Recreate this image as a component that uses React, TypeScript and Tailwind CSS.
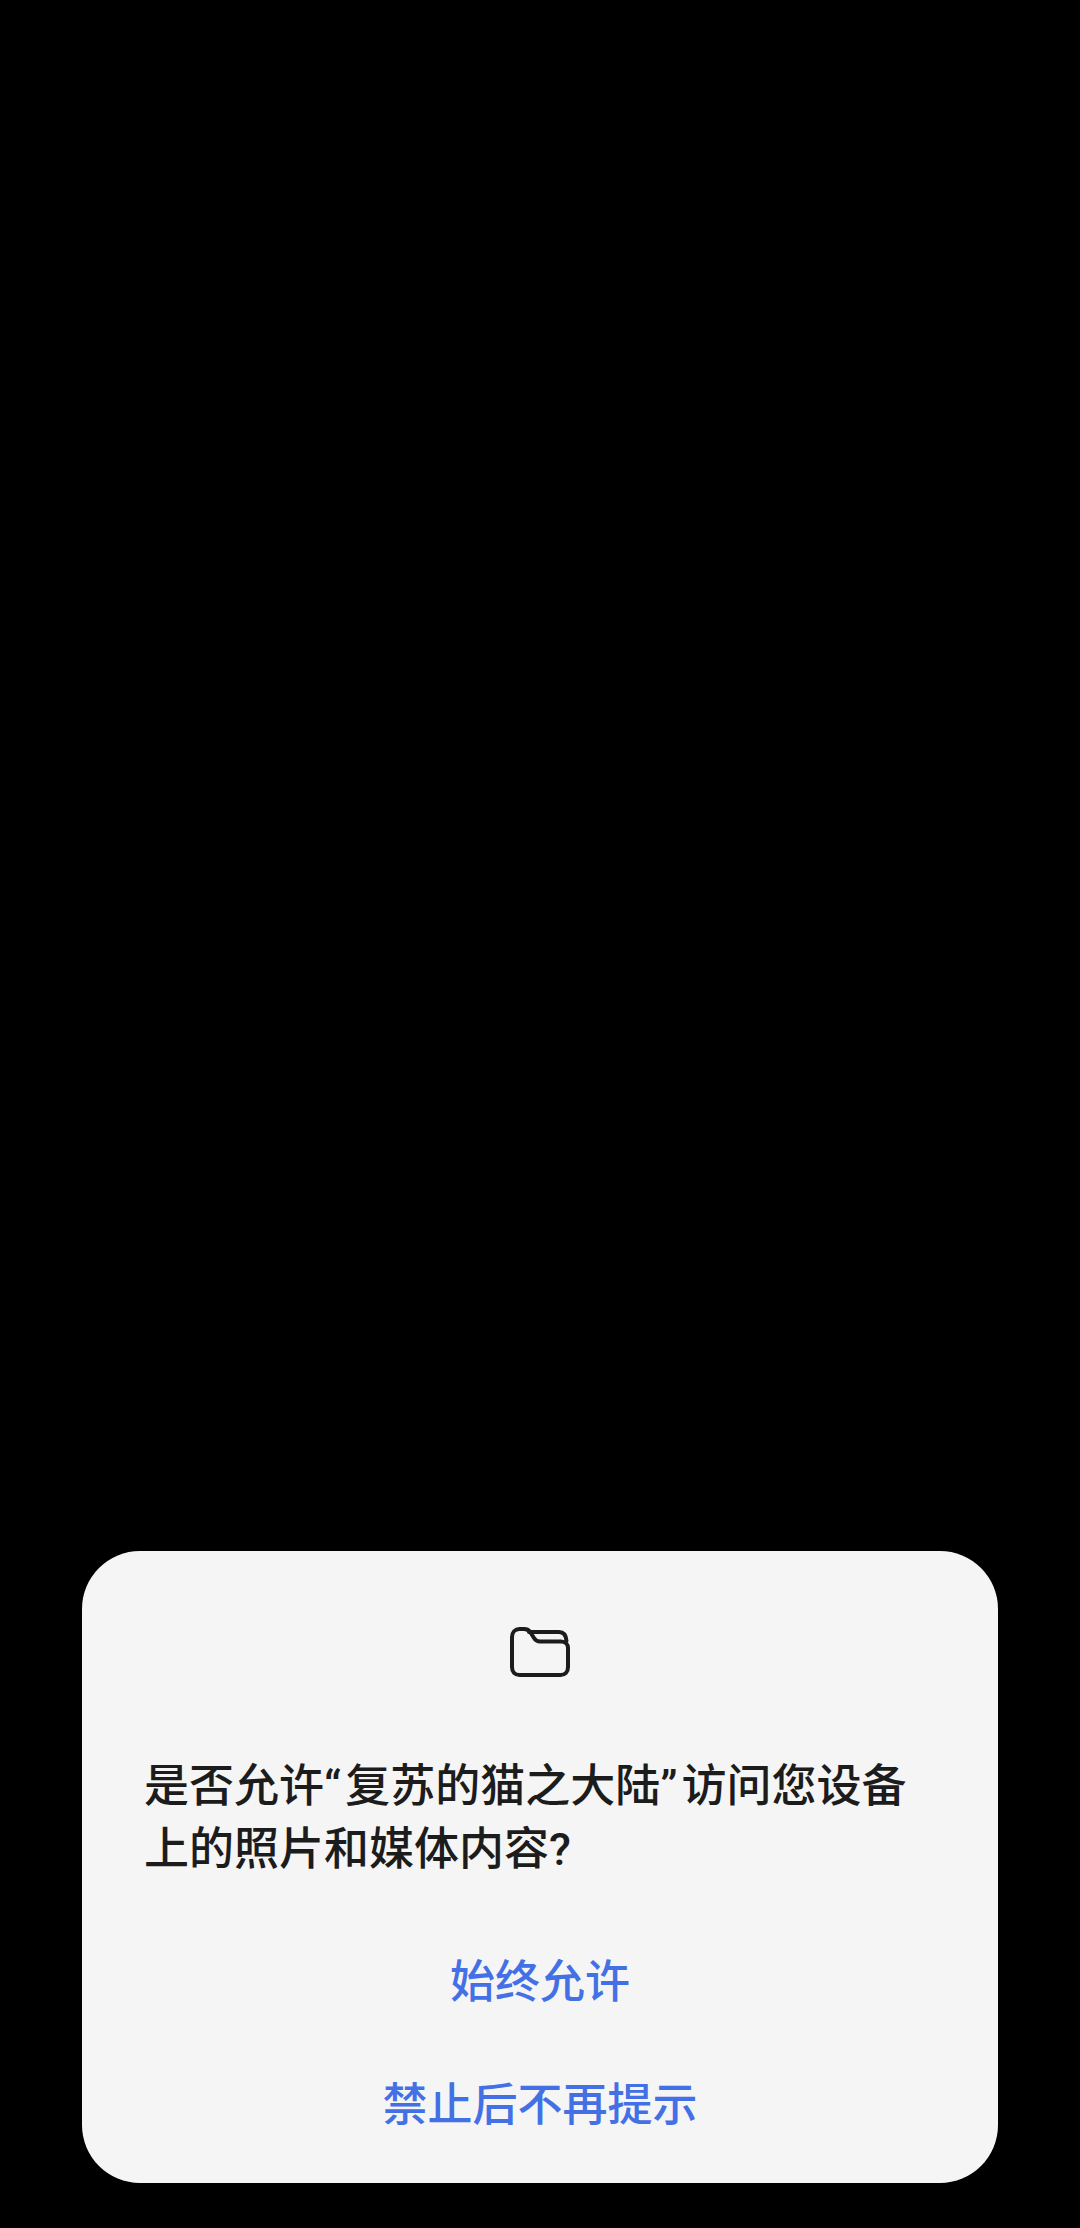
import React from 'react';

const FolderIcon: React.FC = () => (
  <svg width="60" height="50" viewBox="0 0 60 50" fill="none" stroke="#1c1c1c" strokeWidth="4" strokeLinejoin="round" strokeLinecap="round">
    <path d="M2 10C2 5.5 5 2 9.5 2H14C17 2 19 3 20.5 5.5L24 11C25.5 13.5 27.5 14.5 30 14.5H51C55.5 14.5 58 17.5 58 21V40C58 45 55 48 50.5 48H9.5C5 48 2 45 2 40V10Z" />
    <path d="M19 5H49C53 5 56 8 56.5 14" />
  </svg>
);

const ActionButton: React.FC<{ label: string }> = ({ label }) => (
  <button className="w-full h-[123px] flex items-center justify-center text-[45px] leading-none font-medium text-[#4470e6]">
    {label}
  </button>
);

const App: React.FC = () => {
  return (
    <div
      lang="zh-CN"
      className="h-screen bg-black flex flex-col items-center justify-end pb-[45px] font-['Roboto','Noto_Sans_CJK_SC',sans-serif]"
    >
      <div className="w-[916px] h-[632px] bg-[#f5f5f5] rounded-[58px] px-[62px] pt-[76px] flex flex-col">
        <div className="flex justify-center">
          <FolderIcon />
        </div>
        <p className="mt-[78px] text-[45px] leading-[63px] font-medium text-[#1c1c1c]">
          <span className="block whitespace-nowrap">
            是否允许<span className="tracking-[4px]">“</span>复苏的猫之大陆<span className="tracking-[4px]">”</span>访问您设备
          </span>
          <span className="block">上的照片和媒体内容?</span>
        </p>
        <div className="mt-[40px] flex flex-col">
          <ActionButton label="始终允许" />
          <ActionButton label="禁止后不再提示" />
        </div>
      </div>
    </div>
  );
};

export default App;
